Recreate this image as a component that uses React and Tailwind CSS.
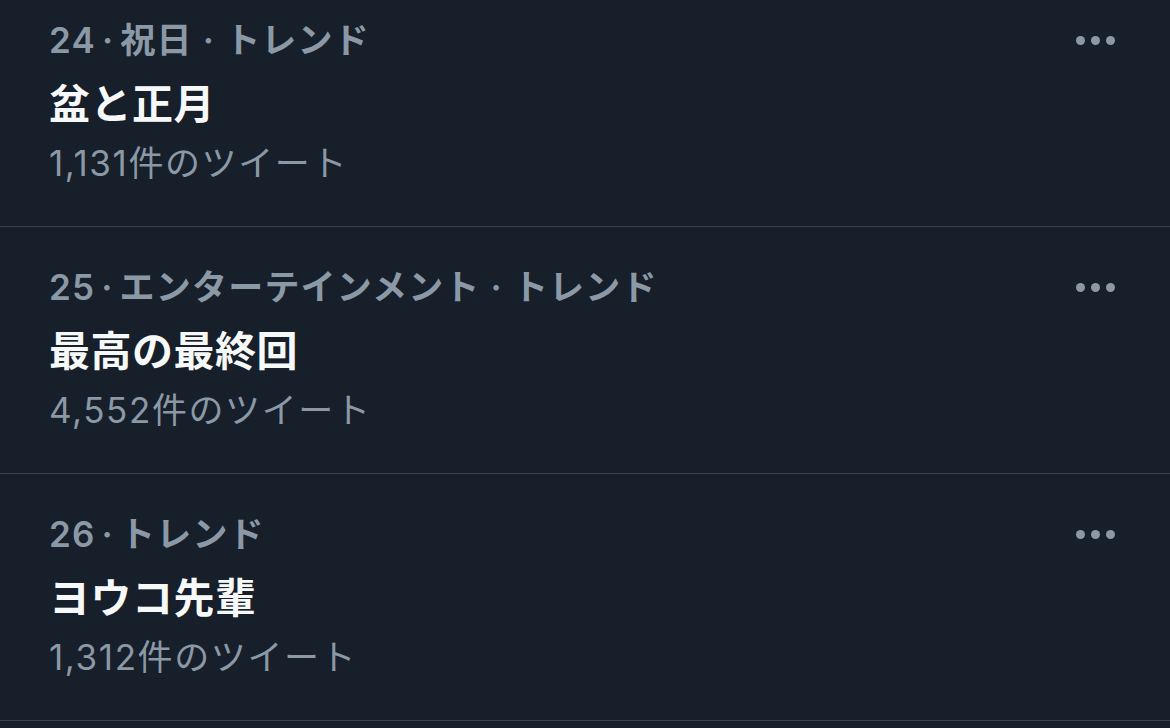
import React from 'react';

const trends = [
  { rank: 24, category: '祝日', title: '盆と正月', count: '1,131' },
  { rank: 25, category: 'エンターテインメント', title: '最高の最終回', count: '4,552' },
  { rank: 26, category: null, title: 'ヨウコ先輩', count: '1,312' },
];

const font = { fontFamily: '"Inter", "Noto Sans CJK JP", sans-serif' };

const MoreDots = () => (
  <div className="flex items-center gap-[6px] h-[48px]">
    <span className="w-[9px] h-[9px] rounded-full bg-[#8b98a5]" />
    <span className="w-[9px] h-[9px] rounded-full bg-[#8b98a5]" />
    <span className="w-[9px] h-[9px] rounded-full bg-[#8b98a5]" />
  </div>
);

const TrendRow = ({ rank, category, title, count }) => (
  <div className="flex justify-between border-b border-[#38444d] pl-[49px] pr-[55px] pt-[36px] pb-[39px]">
    <div className="flex flex-col">
      <div className="h-[48px] leading-[48px] text-[35px] font-semibold tracking-[1.2px] text-[#8b98a5] whitespace-nowrap">
        {rank}
        <span className="mx-[6px]">·</span>
        {category && (
          <>
            {category}
            <span className="mx-[10px]">·</span>
          </>
        )}
        トレンド
      </div>
      <div className="mt-[12px] h-[56px] leading-[56px] text-[41px] font-bold tracking-[0.5px] text-[#f7f9f9]">
        {title}
      </div>
      <div className="mt-[7px] h-[48px] leading-[48px] text-[35px] tracking-[1.6px] text-[#8b98a5]">
        {count}件のツイート
      </div>
    </div>
    <MoreDots />
  </div>
);

export default function App() {
  return (
    <div className="w-full h-[728px] overflow-hidden bg-[#161f2a]" style={font}>
      <div className="-mt-[20px]">
        {trends.map((t) => (
          <TrendRow key={t.rank} {...t} />
        ))}
      </div>
    </div>
  );
}
